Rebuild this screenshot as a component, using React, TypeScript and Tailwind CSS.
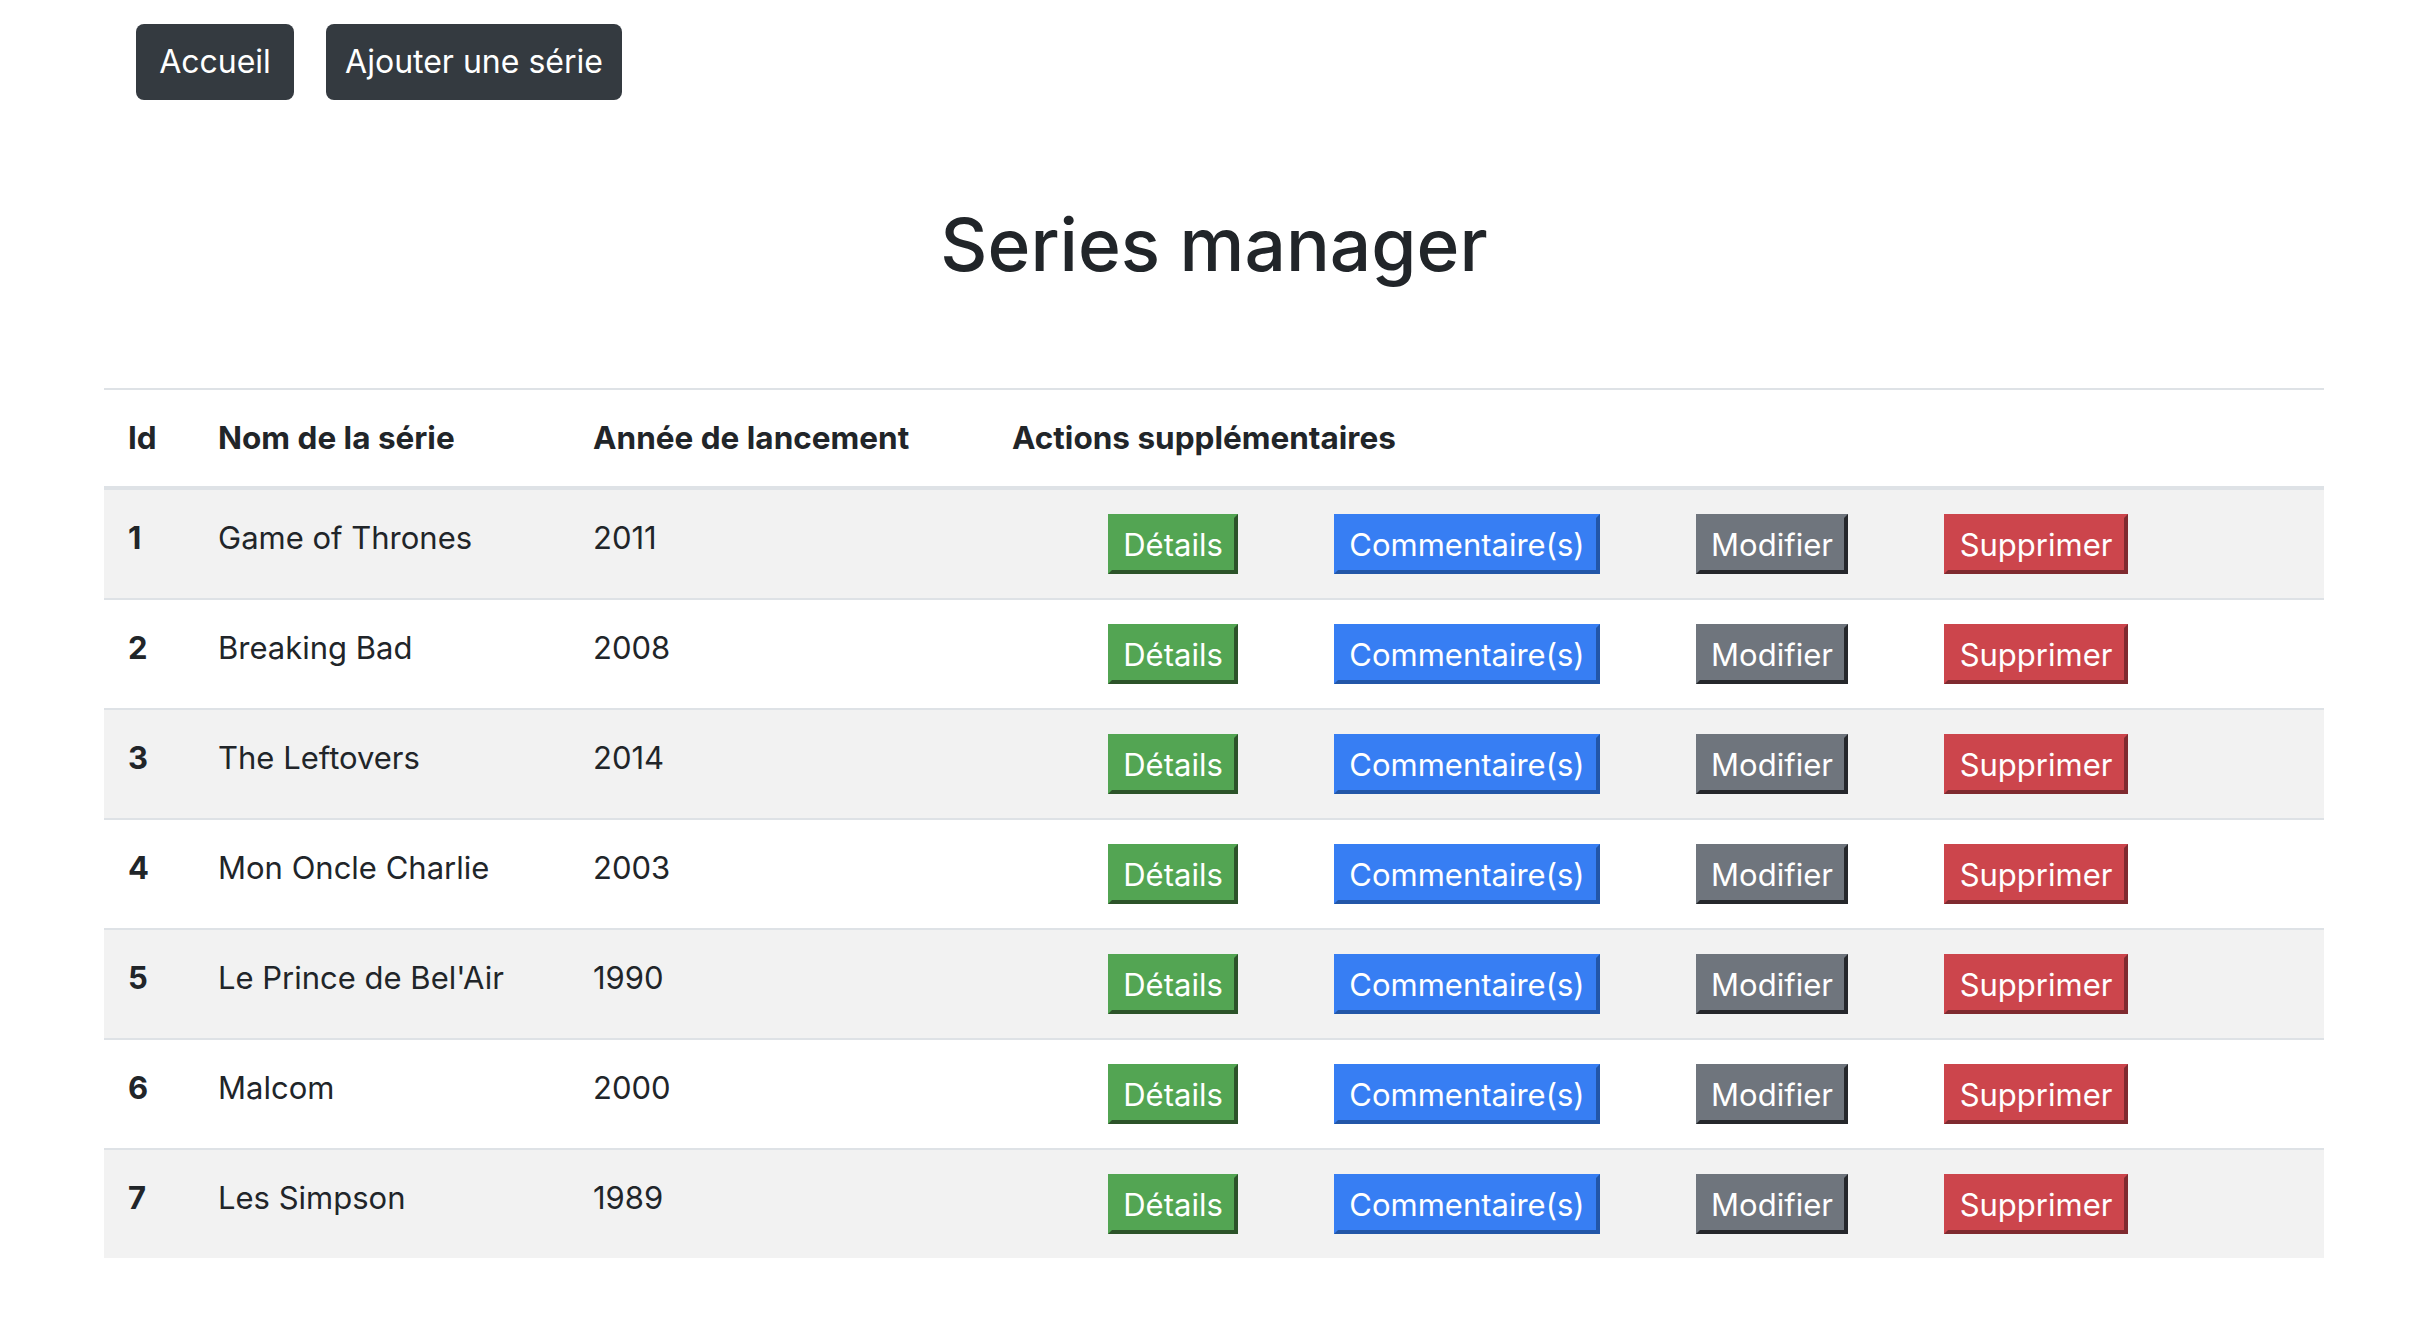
import React from "react";

type Serie = { id: number; name: string; year: number };

const series: Serie[] = [
  { id: 1, name: "Game of Thrones", year: 2011 },
  { id: 2, name: "Breaking Bad", year: 2008 },
  { id: 3, name: "The Leftovers", year: 2014 },
  { id: 4, name: "Mon Oncle Charlie", year: 2003 },
  { id: 5, name: "Le Prince de Bel'Air", year: 1990 },
  { id: 6, name: "Malcom", year: 2000 },
  { id: 7, name: "Les Simpson", year: 1989 },
];

function ActionButtons() {
  return (
    <div className="flex gap-[96px] pl-[96px]">
      <button className="h-[60px] w-[130px] border-4 border-[#53a553] border-r-[#2c5329] border-b-[#2c5329] bg-[#53a553] text-[31px] leading-none text-white">
        Détails
      </button>
      <button className="h-[60px] w-[266px] border-4 border-[#377ef3] border-r-[#2256a8] border-b-[#2256a8] bg-[#377ef3] text-[31px] leading-none text-white">
        Commentaire(s)
      </button>
      <button className="h-[60px] w-[152px] border-4 border-[#6f757d] border-r-[#25272b] border-b-[#25272b] bg-[#6f757d] text-[31px] leading-none text-white">
        Modifier
      </button>
      <button className="h-[60px] w-[184px] border-4 border-[#cc454c] border-r-[#7f2a2f] border-b-[#7f2a2f] bg-[#cc454c] text-[31px] leading-none text-white">
        Supprimer
      </button>
    </div>
  );
}

export default function App() {
  return (
    <div className="min-h-screen bg-white font-['Inter','Liberation_Sans',sans-serif] text-[#212529]">
      <div className="ml-[104px] w-[2220px] pt-[24px]">
        {/* Nav */}
        <nav className="flex gap-[32px] pl-[32px]">
          <button className="h-[76px] w-[158px] rounded-[8px] bg-[#343a40] text-[32px] text-white">
            Accueil
          </button>
          <button className="h-[76px] w-[296px] rounded-[8px] bg-[#343a40] text-[32px] text-white">
            Ajouter une série
          </button>
        </nav>

        {/* Title */}
        <h1 className="mt-[102px] text-center text-[73px] leading-[86px] font-medium">Series manager</h1>

        {/* Table */}
        <table className="mt-[100px] w-full table-fixed border-collapse text-[31px] leading-[48px]">
          <colgroup>
            <col className="w-[90px]" />
            <col className="w-[375px]" />
            <col className="w-[419px]" />
            <col />
          </colgroup>
          <thead>
            <tr className="text-[31.5px]">
              <th className="border-t-2 border-b-4 border-[#dee2e6] p-[24px] text-left font-bold">Id</th>
              <th className="border-t-2 border-b-4 border-[#dee2e6] p-[24px] text-left font-bold">Nom de la série</th>
              <th className="border-t-2 border-b-4 border-[#dee2e6] p-[24px] text-left font-bold">Année de lancement</th>
              <th className="border-t-2 border-b-4 border-[#dee2e6] p-[24px] text-left font-bold">Actions supplémentaires</th>
            </tr>
          </thead>
          <tbody>
            {series.map((s, i) => (
              <tr key={s.id} className={i % 2 === 0 ? "bg-[#f2f2f2]" : "bg-white"}>
                <td className="border-t-2 border-[#dee2e6] p-[24px] align-top font-bold">{s.id}</td>
                <td className="border-t-2 border-[#dee2e6] p-[24px] align-top">{s.name}</td>
                <td className="border-t-2 border-[#dee2e6] p-[24px] align-top">{s.year}</td>
                <td className="border-t-2 border-[#dee2e6] p-[24px] align-top">
                  <ActionButtons />
                </td>
              </tr>
            ))}
          </tbody>
        </table>
      </div>
    </div>
  );
}
